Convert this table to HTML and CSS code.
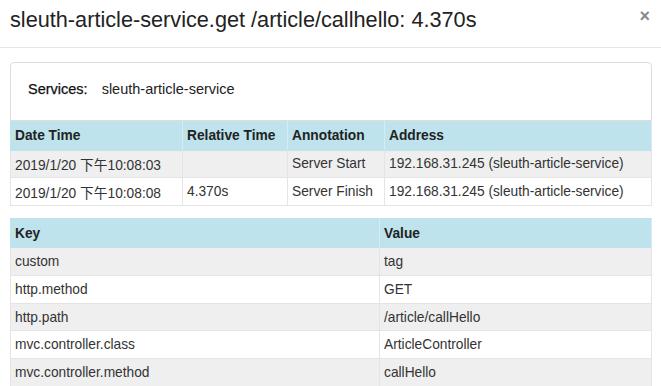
FILE: index.html
```html
<!DOCTYPE html>
<html lang="en">
<head>
  <meta charset="UTF-8" />
  <title>sleuth-article-service.get /article/callhello</title>
  <link rel="stylesheet" href="styles.css">
</head>
<body>
  <div class="modal-header">
    <h4 class="modal-title">sleuth-article-service.get /article/callhello: 4.370s</h4>
    <button class="close" type="button">&times;</button>
  </div>

  <div class="modal-body">
    <!-- services summary -->
    <div class="panel">
      <span class="label">Services:</span>
      <span class="service">sleuth-article-service</span>
    </div>

    <table class="grid annotations">
      <thead>
        <tr>
          <th class="c-date">Date Time</th>
          <th class="c-rel">Relative Time</th>
          <th class="c-ann">Annotation</th>
          <th>Address</th>
        </tr>
      </thead>
      <tbody>
        <tr>
          <td>2019/1/20 下午10:08:03</td>
          <td></td>
          <td>Server Start</td>
          <td>192.168.31.245 (sleuth-article-service)</td>
        </tr>
        <tr>
          <td>2019/1/20 下午10:08:08</td>
          <td>4.370s</td>
          <td>Server Finish</td>
          <td>192.168.31.245 (sleuth-article-service)</td>
        </tr>
      </tbody>
    </table>

    <table class="grid tags">
      <thead>
        <tr>
          <th class="c-key">Key</th>
          <th>Value</th>
        </tr>
      </thead>
      <tbody>
        <tr><td>custom</td><td>tag</td></tr>
        <tr><td>http.method</td><td>GET</td></tr>
        <tr><td>http.path</td><td>/article/callHello</td></tr>
        <tr><td>mvc.controller.class</td><td>ArticleController</td></tr>
        <tr><td>mvc.controller.method</td><td>callHello</td></tr>
      </tbody>
    </table>
  </div>
</body>
</html>
```

FILE: styles.css
```css
body {
  margin: 0;
  font-family: "Liberation Sans", Arial, "Noto Sans CJK SC", sans-serif;
  font-size: 13.75px;
  color: #333;
  background: #fff;
  overflow: hidden;
}

/* Header with title and close button */
.modal-header {
  display: flex;
  align-items: flex-start;
  justify-content: space-between;
  height: 47px;
  padding: 0 10px;
  border-bottom: 1px solid #e5e5e5;
}

.modal-title {
  margin: 0;
  padding-top: 7px;
  font-size: 21.7px;
  font-weight: normal;
  line-height: 26px;
  color: #222;
}

.close {
  margin-top: 6px;
  margin-right: 1px;
  padding: 0;
  border: none;
  background: none;
  font-family: "Liberation Sans", Arial, sans-serif;
  font-size: 18px;
  font-weight: bold;
  line-height: 20px;
  color: #8a8a8a;
  cursor: pointer;
}

.modal-body {
  padding: 14px 9px 0 10px;
}

/* Services box */
.panel {
  display: flex;
  align-items: center;
  gap: 14px;
  height: 52px;
  padding: 0 17px 5px;
  font-size: 14.5px;
  border: 1px solid #ddd;
  border-radius: 4px 4px 0 0;
}

.label {
  color: #111;
  -webkit-text-stroke: 0.25px #111;
}

.service {
  color: #222;
}

/* Tables */
.grid {
  width: 100%;
  border-collapse: collapse;
  table-layout: fixed;
}

.grid th,
.grid td {
  padding: 0 4px;
  height: 26.8px;
  text-align: left;
  white-space: nowrap;
  border: 1px solid #e4e4e4;
  border-top-color: #dcdcdc;
}

.grid th {
  height: 27.5px;
  font-weight: bold;
  color: #222;
  background: #bee3ec;
  border-color: #bee3ec;
  border-right-color: #d4ecf2;
}

.grid tbody tr:nth-child(odd) td {
  background: #efefef;
}

.grid tbody tr:nth-child(even) td {
  background: #fff;
}

.c-date { width: 163px; }
.c-rel { width: 96px; }
.c-ann { width: 88px; }

.tags {
  margin-top: 12px;
}

.tags th {
  height: 28px;
}

.c-key { width: 360px; }
```
